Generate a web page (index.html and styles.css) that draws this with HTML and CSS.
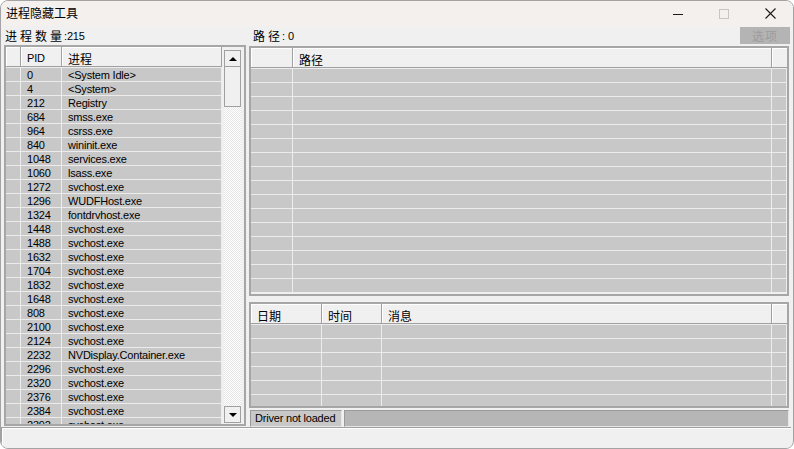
FILE: index.html
```html
<!DOCTYPE html>
<html lang="zh-CN">
<head>
    <meta charset="UTF-8">
    <title>进程隐藏工具</title>
    <link rel="stylesheet" href="styles.css">
</head>
<body>
    <div class="window">
        <div class="titlebar">
            <div class="title">进程隐藏工具</div>
            <div class="caption-buttons">
                <div class="cap-btn">
                    <svg width="10" height="10" viewBox="0 0 10 10"><path d="M0 5.5h10" stroke="#1a1a1a" stroke-width="1"/></svg>
                </div>
                <div class="cap-btn">
                    <svg width="10" height="10" viewBox="0 0 10 10"><rect x="0.5" y="0.5" width="9" height="9" fill="none" stroke="#c6c6c6"/></svg>
                </div>
                <div class="cap-btn">
                    <svg width="11" height="11" viewBox="0 0 11 11"><path d="M0.5 0.5l10 10M10.5 0.5l-10 10" stroke="#1a1a1a" stroke-width="1.1"/></svg>
                </div>
            </div>
        </div>

        <div class="main">
            <!-- process list -->
            <div class="left-pane">
                <div class="label-row">
                    <span class="cjk-label">进程数量</span><span class="colon">:</span><span>215</span>
                </div>
                <div class="grid proc-grid">
                    <div class="grid-body">
                        <div class="grid-table">
                            <div class="hdr proc-cols">
                                <div class="hcell"></div>
                                <div class="hcell">PID</div>
                                <div class="hcell cjk">进程</div>
                            </div>
                            <div class="row proc-cols"><div class="cell"></div><div class="cell">0</div><div class="cell">&lt;System Idle&gt;</div></div>
                            <div class="row proc-cols"><div class="cell"></div><div class="cell">4</div><div class="cell">&lt;System&gt;</div></div>
                            <div class="row proc-cols"><div class="cell"></div><div class="cell">212</div><div class="cell">Registry</div></div>
                            <div class="row proc-cols"><div class="cell"></div><div class="cell">684</div><div class="cell">smss.exe</div></div>
                            <div class="row proc-cols"><div class="cell"></div><div class="cell">964</div><div class="cell">csrss.exe</div></div>
                            <div class="row proc-cols"><div class="cell"></div><div class="cell">840</div><div class="cell">wininit.exe</div></div>
                            <div class="row proc-cols"><div class="cell"></div><div class="cell">1048</div><div class="cell">services.exe</div></div>
                            <div class="row proc-cols"><div class="cell"></div><div class="cell">1060</div><div class="cell">lsass.exe</div></div>
                            <div class="row proc-cols"><div class="cell"></div><div class="cell">1272</div><div class="cell">svchost.exe</div></div>
                            <div class="row proc-cols"><div class="cell"></div><div class="cell">1296</div><div class="cell">WUDFHost.exe</div></div>
                            <div class="row proc-cols"><div class="cell"></div><div class="cell">1324</div><div class="cell">fontdrvhost.exe</div></div>
                            <div class="row proc-cols"><div class="cell"></div><div class="cell">1448</div><div class="cell">svchost.exe</div></div>
                            <div class="row proc-cols"><div class="cell"></div><div class="cell">1488</div><div class="cell">svchost.exe</div></div>
                            <div class="row proc-cols"><div class="cell"></div><div class="cell">1632</div><div class="cell">svchost.exe</div></div>
                            <div class="row proc-cols"><div class="cell"></div><div class="cell">1704</div><div class="cell">svchost.exe</div></div>
                            <div class="row proc-cols"><div class="cell"></div><div class="cell">1832</div><div class="cell">svchost.exe</div></div>
                            <div class="row proc-cols"><div class="cell"></div><div class="cell">1648</div><div class="cell">svchost.exe</div></div>
                            <div class="row proc-cols"><div class="cell"></div><div class="cell">808</div><div class="cell">svchost.exe</div></div>
                            <div class="row proc-cols"><div class="cell"></div><div class="cell">2100</div><div class="cell">svchost.exe</div></div>
                            <div class="row proc-cols"><div class="cell"></div><div class="cell">2124</div><div class="cell">svchost.exe</div></div>
                            <div class="row proc-cols"><div class="cell"></div><div class="cell">2232</div><div class="cell">NVDisplay.Container.exe</div></div>
                            <div class="row proc-cols"><div class="cell"></div><div class="cell">2296</div><div class="cell">svchost.exe</div></div>
                            <div class="row proc-cols"><div class="cell"></div><div class="cell">2320</div><div class="cell">svchost.exe</div></div>
                            <div class="row proc-cols"><div class="cell"></div><div class="cell">2376</div><div class="cell">svchost.exe</div></div>
                            <div class="row proc-cols"><div class="cell"></div><div class="cell">2384</div><div class="cell">svchost.exe</div></div>
                            <div class="row proc-cols"><div class="cell"></div><div class="cell">2392</div><div class="cell">svchost.exe</div></div>
                        </div>
                        <div class="scrollbar">
                            <div class="sb-btn"><span class="arrow-up"></span></div>
                            <div class="sb-thumb"></div>
                            <div class="sb-track"></div>
                            <div class="sb-btn"><span class="arrow-down"></span></div>
                        </div>
                    </div>
                </div>
            </div>

            <!-- path list, log and status -->
            <div class="right-pane">
                <div class="label-row">
                    <span class="cjk-label">路径</span><span class="colon">:</span><span>0</span>
                    <button class="opt-btn" disabled>选项</button>
                </div>
                <div class="grid path-grid">
                    <div class="hdr path-cols">
                        <div class="hcell"></div>
                        <div class="hcell cjk">路径</div>
                        <div class="hcell last"></div>
                    </div>
                    <div class="row path-cols"><div class="cell"></div><div class="cell"></div><div class="cell"></div></div>
                    <div class="row path-cols"><div class="cell"></div><div class="cell"></div><div class="cell"></div></div>
                    <div class="row path-cols"><div class="cell"></div><div class="cell"></div><div class="cell"></div></div>
                    <div class="row path-cols"><div class="cell"></div><div class="cell"></div><div class="cell"></div></div>
                    <div class="row path-cols"><div class="cell"></div><div class="cell"></div><div class="cell"></div></div>
                    <div class="row path-cols"><div class="cell"></div><div class="cell"></div><div class="cell"></div></div>
                    <div class="row path-cols"><div class="cell"></div><div class="cell"></div><div class="cell"></div></div>
                    <div class="row path-cols"><div class="cell"></div><div class="cell"></div><div class="cell"></div></div>
                    <div class="row path-cols"><div class="cell"></div><div class="cell"></div><div class="cell"></div></div>
                    <div class="row path-cols"><div class="cell"></div><div class="cell"></div><div class="cell"></div></div>
                    <div class="row path-cols"><div class="cell"></div><div class="cell"></div><div class="cell"></div></div>
                    <div class="row path-cols"><div class="cell"></div><div class="cell"></div><div class="cell"></div></div>
                    <div class="row path-cols"><div class="cell"></div><div class="cell"></div><div class="cell"></div></div>
                    <div class="row path-cols"><div class="cell"></div><div class="cell"></div><div class="cell"></div></div>
                    <div class="row path-cols"><div class="cell"></div><div class="cell"></div><div class="cell"></div></div>
                    <div class="row path-cols"><div class="cell"></div><div class="cell"></div><div class="cell"></div></div>
                </div>
                <div class="hsplit"></div>
                <div class="grid log-grid">
                    <div class="hdr log-cols">
                        <div class="hcell cjk">日期</div>
                        <div class="hcell cjk">时间</div>
                        <div class="hcell cjk">消息</div>
                        <div class="hcell last"></div>
                    </div>
                    <div class="row log-cols"><div class="cell"></div><div class="cell"></div><div class="cell"></div><div class="cell"></div></div>
                    <div class="row log-cols"><div class="cell"></div><div class="cell"></div><div class="cell"></div><div class="cell"></div></div>
                    <div class="row log-cols"><div class="cell"></div><div class="cell"></div><div class="cell"></div><div class="cell"></div></div>
                    <div class="row log-cols"><div class="cell"></div><div class="cell"></div><div class="cell"></div><div class="cell"></div></div>
                    <div class="row log-cols"><div class="cell"></div><div class="cell"></div><div class="cell"></div><div class="cell"></div></div>
                    <div class="row log-cols"><div class="cell"></div><div class="cell"></div><div class="cell"></div><div class="cell"></div></div>
                </div>
                <div class="statusbar">
                    <div class="panel panel-driver">Driver not loaded</div>
                    <div class="panel panel-rest"></div>
                </div>
            </div>
        </div>

        <div class="bottombar"></div>
    </div>
</body>
</html>
```

FILE: styles.css
```css
* {
    box-sizing: border-box;
}
html, body {
    margin: 0;
    padding: 0;
}
body {
    width: 794px;
    height: 449px;
    overflow: hidden;
    background: #ffffff;
    font-family: 'Liberation Sans', 'Noto Sans CJK SC', sans-serif;
    font-size: 11px;
    letter-spacing: -0.2px;
    color: #000;
}
.window {
    width: 794px;
    height: 449px;
    border: 1px solid #a3a3a3;
    border-radius: 8px;
    background: #f0f0f0;
    display: flex;
    flex-direction: column;
    overflow: hidden;
}

/* title bar */
.titlebar {
    height: 25px;
    flex: none;
    background: #f4f0ed;
    display: flex;
    align-items: center;
}
.title {
    padding-left: 5px;
    font-family: 'Noto Sans CJK SC', sans-serif;
    font-size: 12px;
    letter-spacing: 0;
    line-height: 14px;
    margin-top: -1px;
}
.caption-buttons {
    margin-left: auto;
    display: flex;
}
.cap-btn {
    width: 46px;
    height: 25px;
    display: flex;
    align-items: center;
    justify-content: center;
}
.cap-btn svg {
    display: block;
}

/* main area */
.main {
    height: 401px;
    flex: none;
    display: flex;
    gap: 3px;
    padding: 0 3px;
}
.left-pane {
    width: 242px;
    display: flex;
    flex-direction: column;
}
.right-pane {
    flex: 1;
    display: flex;
    flex-direction: column;
}
.label-row {
    height: 19px;
    flex: none;
    display: flex;
    align-items: flex-start;
    padding-top: 3px;
    padding-left: 1px;
    line-height: 14px;
}
.right-pane .label-row {
    height: 20px;
    padding-left: 4px;
}
.cjk-label {
    font-family: 'Noto Sans CJK SC', sans-serif;
    font-size: 12px;
    letter-spacing: 3px;
}
.colon {
    margin: 0 0 0 -1px;
}
.right-pane .colon {
    margin-right: 3px;
}
.opt-btn {
    margin-left: auto;
    margin-top: -2px;
    width: 50px;
    height: 17px;
    border: none;
    padding: 0;
    background: #b4b4b4;
    color: #9c9c9c;
    font-family: 'Noto Sans CJK SC', sans-serif;
    font-size: 12px;
    letter-spacing: 1px;
    line-height: 17px;
}

/* grids */
.grid {
    border: 2px solid #a6a6a6;
    background: #f0f0f0;
    overflow: hidden;
}
.proc-grid {
    height: 381px;
}
.grid-body {
    display: flex;
    height: 100%;
}
.grid-table {
    width: 216px;
    overflow: hidden;
}
.hdr {
    display: grid;
    height: 20px;
}
.hcell {
    border-right: 1px solid #a0a0a0;
    border-bottom: 1px solid #a0a0a0;
    box-shadow: inset 1px 1px #ffffff;
    padding: 5px 0 0 6px;
    line-height: 13px;
    white-space: nowrap;
}
.hcell.cjk {
    font-family: 'Noto Sans CJK SC', sans-serif;
    font-size: 12px;
    letter-spacing: 0;
    padding-top: 4px;
    line-height: 15px;
}
.hcell.last {
    border-right: none;
}
.row {
    display: grid;
    height: 14px;
}
.cell {
    background: #c8c8c8;
    border-top: 1px solid #ececec;
    border-right: 1px solid #ececec;
    padding: 2px 0 0 6px;
    line-height: 11px;
    white-space: nowrap;
}
.proc-cols {
    grid-template-columns: 15px 41px 160px;
}
.path-cols {
    grid-template-columns: 42px 1fr 15px;
}
.log-cols {
    grid-template-columns: 71px 60px 1fr 15px;
}
.path-grid {
    height: 250px;
    margin-right: 1px;
}
.hsplit {
    height: 6px;
    flex: none;
}
.log-grid {
    height: 106px;
    margin-right: 1px;
}

/* scrollbar */
.scrollbar {
    width: 22px;
    display: flex;
    flex-direction: column;
    padding: 3px 3px 1px 2px;
    position: relative;
    background: #f0f0f0;
}
.sb-btn {
    height: 17px;
    flex: none;
    background: #f0f0f0;
    border: 1px solid #a0a0a0;
    display: flex;
    align-items: center;
    justify-content: center;
}
.sb-thumb {
    height: 40px;
    flex: none;
    background: #f0f0f0;
    border: 1px solid #a0a0a0;
    border-top: none;
}
.sb-track {
    flex: 1;
    background: repeating-conic-gradient(#e6e6e6 0 25%, #ffffff 0 50%) 0 0 / 2px 2px;
}
.arrow-up {
    width: 0;
    height: 0;
    border-left: 4px solid transparent;
    border-right: 4px solid transparent;
    border-bottom: 4px solid #000;
}
.arrow-down {
    width: 0;
    height: 0;
    border-left: 4px solid transparent;
    border-right: 4px solid transparent;
    border-top: 4px solid #000;
}

/* status bar */
.statusbar {
    height: 17px;
    flex: none;
    margin-top: 2px;
    display: flex;
    gap: 2px;
    padding-left: 1px;
    margin-right: 1px;
}
.panel {
    border: 1px solid;
    border-color: #9a9a9a #e6e6e6 #e6e6e6 #9a9a9a;
    line-height: 14px;
    padding-left: 4px;
    white-space: nowrap;
}
.panel-driver {
    width: 92px;
    background: #c8c8c8;
}
.panel-rest {
    flex: 1;
    background: #b6b6b6;
}

/* bottom strip */
.bottombar {
    flex: 1;
    margin: 0 2px 0 0;
    border-top: 1px solid #a0a0a0;
    border-left: 1px solid #a0a0a0;
    box-shadow: inset 1px 1px #ffffff;
    background: #f0f0f0;
}
```
